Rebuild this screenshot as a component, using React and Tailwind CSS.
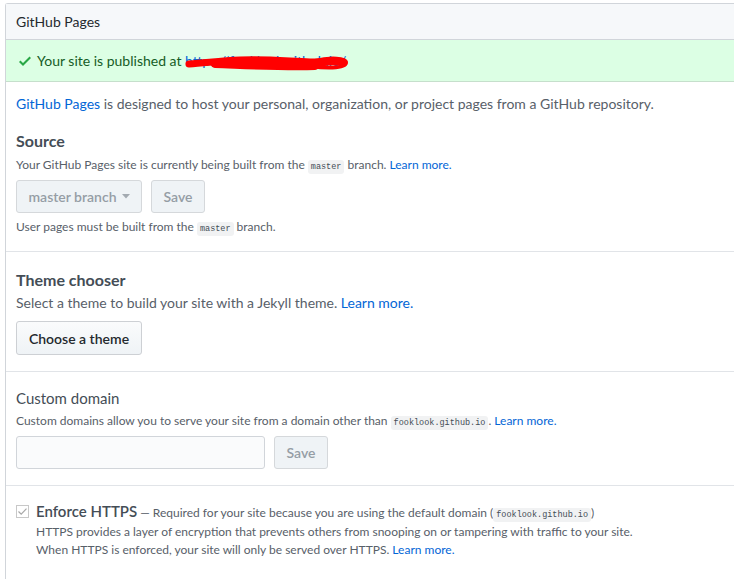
import React from "react";

const font = { fontFamily: "Lato, 'Liberation Sans', sans-serif" };

function Code({ children }) {
  return (
    <code className="bg-[#f1f2f3] rounded-[3px] px-[3px] py-[2px] text-[8.5px] leading-none text-[#444d56] font-['Liberation_Mono',monospace]">
      {children}
    </code>
  );
}

function Learn() {
  return <a className="text-[#0366d6]">Learn more.</a>;
}

export default function App() {
  return (
    <div className="w-[734px] h-[579px] overflow-hidden bg-white pl-[5px] pt-[3px]" style={font}>
      <div className="w-[780px] h-[600px] border-l border-t border-[#d1d5da] rounded-tl-[3px]">
        {/* header */}
        <div className="h-[36px] bg-[#f6f8fa] border-b border-[#d1d5da] flex items-center pl-[10px] text-[14px] text-[#24292e]">
          GitHub Pages
        </div>
        {/* flash */}
        <div className="h-[42px] bg-[#dcffe4] border-b border-[#c6dfcc] flex items-center pl-[13px] text-[14px] text-[#165c26]">
          <svg width="12" height="16" viewBox="0 0 12 16" className="mr-[6px] fill-[#28a745]">
            <path d="M12 5l-8 8-4-4 1.5-1.5L4 10l6.5-6.5L12 5z" />
          </svg>
          <span>Your site is published at&nbsp;</span>
          <span className="relative text-[#0366d6]">
            https://fooklook.github.io/
            <svg className="absolute left-[0px] top-[3px]" width="170" height="26" viewBox="0 0 170 26">
              <g fill="none" stroke="#ff0000" strokeLinecap="round" strokeLinejoin="round">
                <path d="M4 11 C 20 10, 35 8, 55 7 C 80 6, 100 8, 125 9 C 140 9, 150 8, 158 9" strokeWidth="7" />
                <path d="M30 11 C 60 12, 95 14, 130 13" strokeWidth="8" />
                <path d="M50 8 C 80 7, 110 10, 140 10" strokeWidth="6" />
                <path d="M130 8 C 145 4, 162 5, 161 10 C 160 16, 138 15, 126 13" strokeWidth="4" />
              </g>
            </svg>
          </span>
        </div>
        {/* body */}
        <div className="pl-[10px] pr-[10px]">
          <p className="pt-[11px] text-[14px] leading-[21px] text-[#586069]">
            <a className="text-[#0366d6]">GitHub Pages</a> is designed to host your personal, organization, or project pages from a GitHub repository.
          </p>
          <h3 className="mt-[15px] text-[16px] leading-[24px] font-bold text-[#444d56]">Source</h3>
          <p className="mt-[3px] text-[12px] leading-[18px] text-[#586069]">
            Your GitHub Pages site is currently being built from the <Code>master</Code> branch. <Learn />
          </p>
          <div className="mt-[6px] flex gap-[9px]">
            <div className="h-[33px] w-[126px] rounded-[3px] border border-[#d5d8db] bg-[#eff3f6] flex items-center justify-center text-[14px] text-[#959da5] font-semibold">
              master branch
              <svg width="8" height="5" viewBox="0 0 8 5" className="ml-[5px] fill-[#a3aab1]">
                <path d="M0 0h8L4 4.5z" />
              </svg>
            </div>
            <div className="h-[33px] w-[54px] rounded-[3px] border border-[#d5d8db] bg-[#eff3f6] flex items-center justify-center text-[14px] text-[#959da5] font-semibold">
              Save
            </div>
          </div>
          <p className="mt-[5px] text-[12px] leading-[18px] text-[#586069]">
            User pages must be built from the <Code>master</Code> branch.
          </p>
        </div>
        <div className="mt-[15px] border-t border-[#e1e4e8]" />
        <div className="pl-[10px] pr-[10px]">
          <h3 className="mt-[16px] text-[16px] leading-[24px] font-bold text-[#444d56]">Theme chooser</h3>
          <p className="text-[14px] leading-[21px] text-[#586069]">
            Select a theme to build your site with a Jekyll theme. <Learn />
          </p>
          <div className="mt-[8px] h-[34px] w-[126px] rounded-[3px] border border-[#cdd0d4] bg-gradient-to-b from-[#fafbfc] to-[#eff3f6] flex items-center justify-center text-[14px] text-[#24292e] font-semibold">
            Choose a theme
          </div>
        </div>
        <div className="mt-[16px] border-t border-[#e1e4e8]" />
        <div className="pl-[10px] pr-[10px]">
          <h3 className="mt-[15px] text-[15px] leading-[22px] text-[#444d56]">Custom domain</h3>
          <p className="mt-[3px] text-[12px] leading-[18px] text-[#586069]">
            Custom domains allow you to serve your site from a domain other than <Code>fooklook.github.io</Code>. <Learn />
          </p>
          <div className="mt-[6px] flex gap-[9px]">
            <div className="h-[33px] w-[249px] rounded-[3px] border border-[#d1d5da] bg-[#fafbfc]" />
            <div className="h-[33px] w-[54px] rounded-[3px] border border-[#d5d8db] bg-[#eff3f6] flex items-center justify-center text-[14px] text-[#959da5] font-semibold">
              Save
            </div>
          </div>
        </div>
        <div className="mt-[16px] border-t border-[#e1e4e8]" />
        <div className="pl-[10px] pr-[10px] pt-[15px] flex">
          <svg width="13" height="13" viewBox="0 0 13 13" className="mt-[4px] mr-[7px] shrink-0">
            <rect x="0.5" y="0.5" width="12" height="12" fill="#fff" stroke="#c8c8c8" />
            <path d="M2.5 6.5 L5.2 9.2 L10.5 3.6" fill="none" stroke="#a8a8a8" strokeWidth="1.2" />
          </svg>
          <div>
            <div className="text-[15px] leading-[20px] text-[#444d56]">
              <span className="font-semibold">Enforce HTTPS</span>
              <span className="text-[12px] text-[#586069]">
                {" "}— Required for your site because you are using the default domain (<Code>fooklook.github.io</Code>)
              </span>
            </div>
            <p className="text-[12px] leading-[18px] text-[#586069]">
              HTTPS provides a layer of encryption that prevents others from snooping on or tampering with traffic to your site.
            </p>
            <p className="text-[12px] leading-[18px] text-[#586069]">
              When HTTPS is enforced, your site will only be served over HTTPS. <Learn />
            </p>
          </div>
        </div>
      </div>
    </div>
  );
}
